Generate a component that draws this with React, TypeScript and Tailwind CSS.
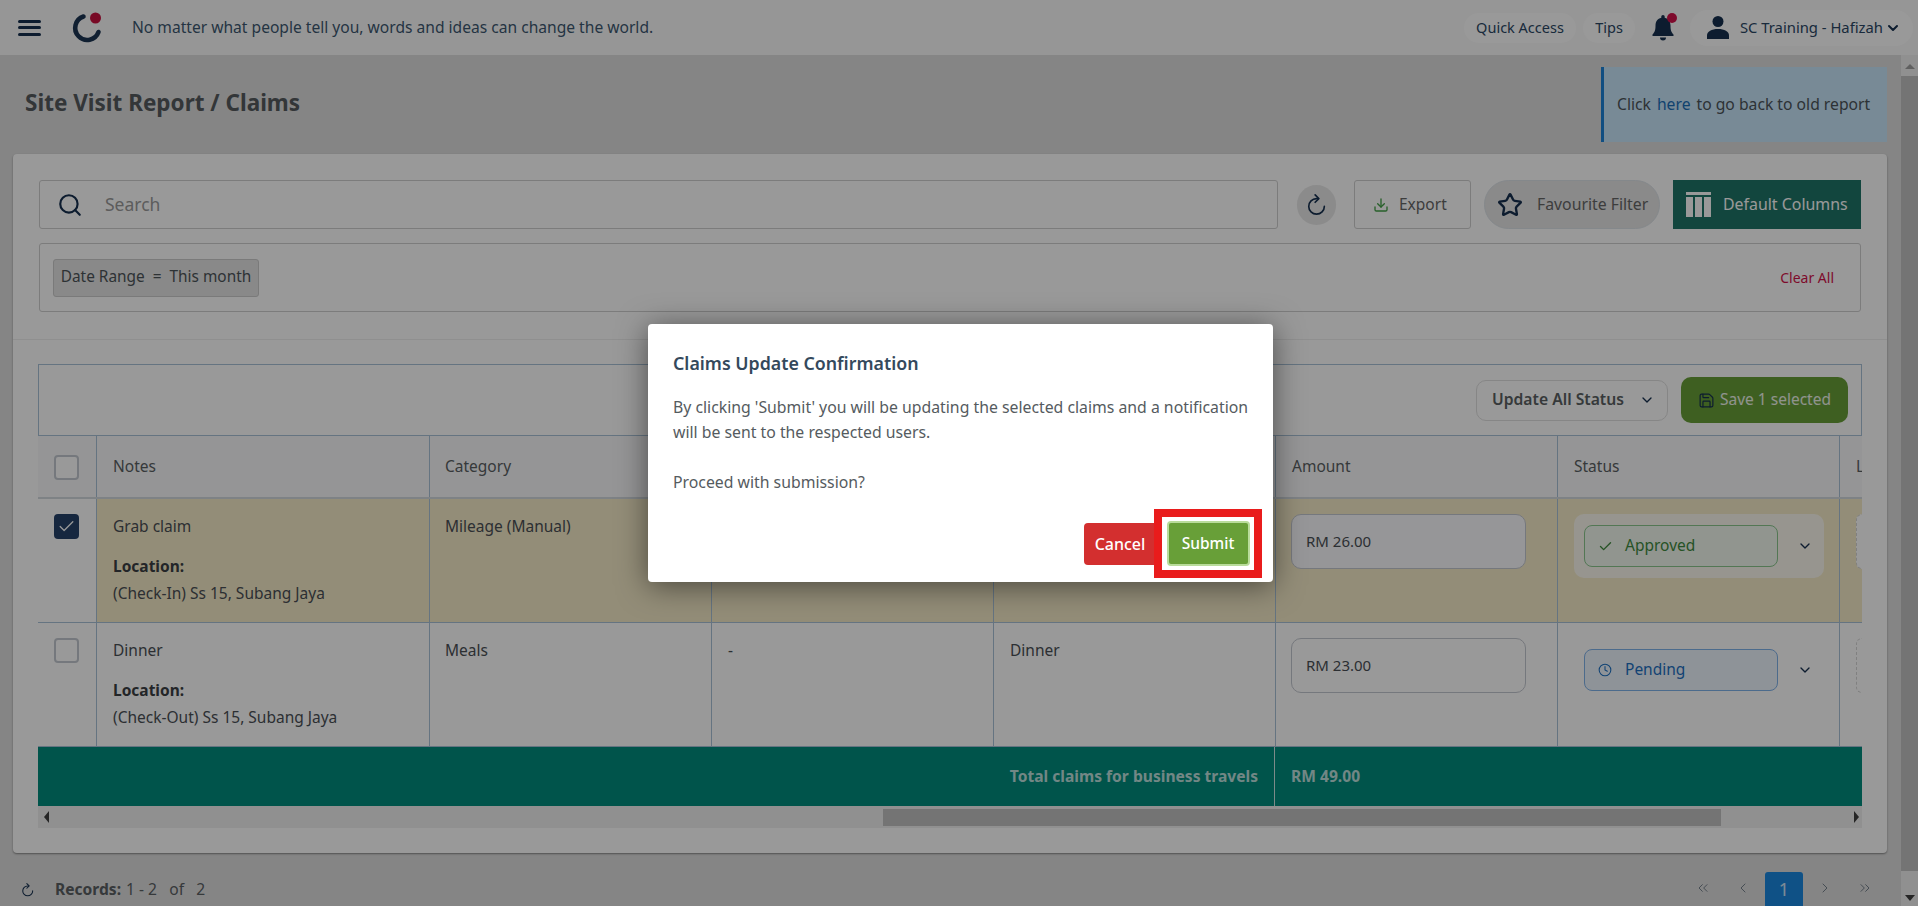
import { Check, ChevronDown, ChevronLeft, ChevronRight, ChevronsLeft, ChevronsRight, Clock, Download, Save, Search, Star } from "lucide-react";

const font = "font-['Noto_Sans','Open_Sans',sans-serif]";

function Logo() {
  return (
    <svg width="32" height="32" viewBox="0 0 32 32" fill="none">
      <path d="M12.5 4.5A12 12 0 1 0 27.5 20" stroke="#1c3553" strokeWidth="4.6" strokeLinecap="round" />
      <circle cx="24.5" cy="6" r="5.5" fill="#c8103f" />
    </svg>
  );
}

function Bell() {
  return (
    <svg width="22" height="26" viewBox="0 0 22 26" fill="#16304f">
      <path d="M11 0c1 0 1.700.8 1.700 1.700v1C16.500 3.500 18.500 6.600 18.500 10.500c0 5 .9 6.800 3 9V21H.5v-1.500c2.100-2.200 3-4 3-9 0-3.900 2-7 5.800-7.800v-1C9.300.8 10 0 11 0Z" />
      <path d="M8 22.500h6a3 3 0 0 1-6 0Z" />
    </svg>
  );
}

function Person() {
  return (
    <svg width="22" height="23" viewBox="0 0 22 23" fill="#16304f">
      <circle cx="11" cy="5.500" r="5.500" />
      <path d="M0 23v-3.500C0 15.500 4.500 13 11 13s11 2.500 11 6.500V23Z" />
    </svg>
  );
}

function ColumnsIcon() {
  return (
    <svg width="25" height="25" viewBox="0 0 25 25" fill="#ffffff">
      <rect x="0" y="0" width="25" height="3" />
      <rect x="0" y="5" width="7" height="20" />
      <rect x="9" y="5" width="7" height="20" />
      <rect x="18" y="5" width="7" height="20" />
    </svg>
  );
}

function Reload({ size }: { size: number }) {
  return (
    <svg width={size} height={size} viewBox="0 0 24 24" fill="none" stroke="#16304f" strokeWidth="1.800" strokeLinecap="round" strokeLinejoin="round">
      <path d="M20 13.500A8.500 8.500 0 1 1 11.500 5H13" />
      <path d="M10 1l4 4-4 4" />
    </svg>
  );
}

function Box({ checked }: { checked?: boolean }) {
  return (
    <div
      className={
        checked
          ? "w-[25px] h-[25px] rounded-[4px] bg-[#26426a] flex items-center justify-center"
          : "w-[25px] h-[25px] rounded-[4px] border-2 border-[#c3c9d0] bg-white"
      }
    >
      {checked && <Check size={19} strokeWidth={1.6} className="text-white" />}
    </div>
  );
}

function NotesCell({ title, place }: { title: string; place: string }) {
  return (
    <div className="border-r border-[#a9c1d8] pl-4 pt-[17px] text-[15.500px] text-[#4a4f55]">
      <p className="h-5 leading-5">{title}</p>
      <p className="mt-5 h-5 leading-5 font-bold text-[#3b3f44]">Location:</p>
      <p className="mt-[7px] h-5 leading-5">{place}</p>
    </div>
  );
}

function Row({ selected, title, place, category, children }: { selected?: boolean; title: string; place: string; category: string; children: React.ReactNode }) {
  return (
    <div className={`grid grid-cols-[59px_333px_282px_282px_282px_282px_282px_23px] h-[124px] border-b border-[#a9c1d8] ${selected ? "bg-[#f6ecc8]" : "bg-white"}`}>
      <div className="bg-white border-r border-[#a9c1d8] pl-4 pt-[15px]">
        <Box checked={selected} />
      </div>
      <NotesCell title={title} place={place} />
      <div className="border-r border-[#a9c1d8] pl-[15px] pt-[17px] text-[15.500px] leading-5 text-[#4a4f55]">{category}</div>
      {children}
    </div>
  );
}

function AmountInput({ value, filled }: { value: string; filled?: boolean }) {
  return (
    <div className={`w-[235px] h-[55px] rounded-[10px] border border-[#c4c8d0] flex items-center pl-[14px] text-[15px] text-[#4a4f55] ${filled ? "bg-[#fbfbfd]" : "bg-white"}`}>
      {value}
    </div>
  );
}

function DashedStub() {
  return <div className="w-[20px] ml-4 h-[55px] rounded-l-[6px] border border-dashed border-[#d5d5d5] bg-white" />;
}

export default function App() {
  return (
    <div className={`${font} relative w-[1918px] h-[906px] overflow-hidden flex flex-col bg-[#dedede]`}>
      {/* top bar */}
      <header className="h-[55px] shrink-0 bg-[#fbfbfb] flex items-center pl-[18px] pr-[5px]">
        <div className="w-[23px] flex flex-col gap-[3.500px]">
          <span className="h-[3px] rounded-full bg-[#16304f]" />
          <span className="h-[3px] rounded-full bg-[#16304f]" />
          <span className="h-[3px] rounded-full bg-[#16304f]" />
        </div>
        <div className="ml-[30px]">
          <Logo />
        </div>
        <p className="ml-[29px] text-[15.600px] text-[#3d5870]">No matter what people tell you, words and ideas can change the world.</p>
        <div className="ml-auto flex items-center">
          <button className="h-[30px] w-[112px] rounded-full bg-white text-[14.500px] text-[#2b4764]">Quick Access</button>
          <button className="ml-[7px] h-[30px] w-[52px] rounded-full bg-white text-[14.500px] text-[#2b4764]">Tips</button>
          <div className="relative ml-[17px] w-[21px]">
            <Bell />
            <span className="absolute -top-[2px] left-[15px] w-[10px] h-[10px] rounded-full bg-[#d3124a]" />
          </div>
          <div className="ml-[17px] h-[36px] w-[223px] rounded-full bg-white flex items-center pl-[17px]">
            <Person />
            <span className="ml-[11px] whitespace-nowrap text-[14.800px] text-[#2b4764]">SC Training - Hafizah</span>
            <ChevronDown size={16} strokeWidth={3} className="ml-auto mr-[12px] shrink-0 text-[#16304f]" />
          </div>
        </div>
      </header>

      <div className="flex-1 flex min-h-0">
        <main className="flex-1 min-w-0 flex flex-col">
          {/* page heading */}
          <div className="h-[99px] shrink-0 flex items-start pl-[25px] pr-[14px]">
            <h1 className="mt-[33px] text-[22.500px] leading-[30px] font-bold text-[#555a5e]">Site Visit Report / Claims</h1>
            <div className="ml-auto mt-3 w-[286px] h-[75px] bg-[#c8e6fb] border-l-[3px] border-[#1d83d8] flex items-center pl-[13px] text-[15.700px] text-[#4c5459]">
              Click<a className="mx-[6px] text-[#1b6fb8]">here</a>to go back to old report
            </div>
          </div>

          {/* filters + table card */}
          <section className="ml-[13px] mr-[14px] h-[699px] shrink-0 bg-white rounded-[4px] shadow-[0_1px_2px_rgba(0,0,0,0.4)]">
            <div className="h-[186px] px-[26px] pt-[26px] border-b border-[#eeeeee]">
              <div className="flex items-center h-[49px]">
                <div className="flex-1 h-full rounded-[3px] border border-[#cfcfcf] flex items-center pl-[17px]">
                  <Search size={26} strokeWidth={2} className="text-[#16304f]" />
                  <span className="ml-[22px] text-[17.500px] text-[#9a9a9a]">Search</span>
                </div>
                <button className="ml-[19px] w-[39px] h-[40px] rounded-full bg-[#e8e8e8] flex items-center justify-center">
                  <Reload size={22} />
                </button>
                <button className="ml-[18px] w-[117px] h-full rounded-[3px] border border-[#cfcfcf] flex items-center pl-[18px] text-[15.500px] text-[#666]">
                  <Download size={16} strokeWidth={2} className="text-[#43a047]" />
                  <span className="ml-[10px]">Export</span>
                </button>
                <button className="ml-[13px] w-[176px] h-full rounded-full bg-[#e6e6e6] border border-[#dde3e8] flex items-center pl-[12px] text-[15.800px] text-[#666]">
                  <Star size={26} strokeWidth={2.2} className="text-[#16304f]" />
                  <span className="ml-[14px]">Favourite Filter</span>
                </button>
                <button className="ml-[13px] w-[188px] h-full bg-[#1f7568] flex items-center pl-[13px] text-[15.900px] text-white">
                  <ColumnsIcon />
                  <span className="ml-[12px]">Default Columns</span>
                </button>
              </div>
              <div className="mt-[14px] h-[69px] rounded-[3px] border border-[#cfcfcf] flex items-center pl-[13px] pr-[26px]">
                <span className="h-[38px] w-[206px] rounded-[3px] border border-[#cccccc] bg-[#e4e4e4] flex items-center justify-center pb-[2px] text-[15.400px] text-[#4c5459]">
                  Date Range&nbsp; =&nbsp; This month
                </span>
                <span className="ml-auto text-[14px] text-[#d3124a]">Clear All</span>
              </div>
            </div>

            <div className="mx-[25px] mt-[24px] overflow-hidden">
              <div className="h-[72px] border border-[#a9c1d8] flex items-center justify-end pr-[13px]">
                <button className="w-[192px] h-[41px] rounded-[10px] border border-[#e0e0e0] flex items-center pl-[15px] text-[15.700px] font-semibold text-[#5a5f63]">
                  Update All Status
                  <ChevronDown size={16} strokeWidth={2} className="ml-auto mr-[12px] text-[#16304f]" />
                </button>
                <button className="ml-[13px] w-[167px] h-[46px] rounded-[10px] bg-[#689f38] flex items-center pl-[17px] text-[15.500px] text-white/90">
                  <Save size={17} strokeWidth={1.7} className="text-[#16304f]" />
                  <span className="ml-[5px]">Save 1 selected</span>
                </button>
              </div>

              {/* column heads */}
              <div className="grid grid-cols-[59px_333px_282px_282px_282px_282px_282px_23px] h-[63px] border-b-2 border-[#d3d9de] bg-[#f8f9fa] text-[15.500px] text-[#5a5f63]">
                <div className="border-r border-[#a9c1d8] pl-4 pt-[19px]"><Box /></div>
                <div className="border-r border-[#a9c1d8] pl-4 pt-[19px]">Notes</div>
                <div className="border-r border-[#a9c1d8] pl-[15px] pt-[19px]">Category</div>
                <div className="border-r border-[#a9c1d8]" />
                <div className="border-r border-[#a9c1d8]" />
                <div className="border-r border-[#a9c1d8] pl-4 pt-[19px]">Amount</div>
                <div className="border-r border-[#a9c1d8] pl-4 pt-[19px]">Status</div>
                <div className="pl-4 pt-[19px]">L</div>
              </div>

              <Row selected title="Grab claim" place="(Check-In) Ss 15, Subang Jaya" category="Mileage (Manual)">
                <div className="border-r border-[#a9c1d8]" />
                <div className="border-r border-[#a9c1d8]" />
                <div className="border-r border-[#a9c1d8] pl-[15px] pt-[15px]"><AmountInput value="RM 26.00" filled /></div>
                <div className="border-r border-[#a9c1d8] pl-4 pt-[15px]">
                  <div className="w-[250px] h-[64px] rounded-[10px] bg-white/70 flex items-center pl-[10px]">
                    <span className="w-[194px] h-[42px] rounded-[8px] border border-[#8ac78d] bg-[#f2f8ee] flex items-center pl-[13px] text-[15.500px] text-[#3f8a3f]">
                      <Check size={15} strokeWidth={2.2} className="text-[#3f8a3f]" />
                      <span className="ml-[12px]">Approved</span>
                    </span>
                    <ChevronDown size={16} strokeWidth={2} className="ml-[19px] text-[#16304f]" />
                  </div>
                </div>
                <div className="pt-[15px]"><DashedStub /></div>
              </Row>

              <Row title="Dinner" place="(Check-Out) Ss 15, Subang Jaya" category="Meals">
                <div className="border-r border-[#a9c1d8] pl-4 pt-[17px] text-[15.500px] leading-5 text-[#4a4f55]">-</div>
                <div className="border-r border-[#a9c1d8] pl-4 pt-[17px] text-[15.500px] leading-5 text-[#4a4f55]">Dinner</div>
                <div className="border-r border-[#a9c1d8] pl-[15px] pt-[15px]"><AmountInput value="RM 23.00" /></div>
                <div className="border-r border-[#a9c1d8] pl-[26px] pt-[26px]">
                  <div className="flex items-center">
                    <span className="w-[194px] h-[42px] rounded-[8px] border border-[#7fb2ea] bg-[#edf5fd] flex items-center pl-[13px] text-[15.500px] text-[#1d70c2]">
                      <Clock size={14} strokeWidth={1.8} className="text-[#1d70c2]" />
                      <span className="ml-[13px]">Pending</span>
                    </span>
                    <ChevronDown size={16} strokeWidth={2} className="ml-[19px] text-[#16304f]" />
                  </div>
                </div>
                <div className="pt-[15px]"><DashedStub /></div>
              </Row>

              {/* total */}
              <div className="h-[59px] bg-[#008c7e] flex text-[15.600px] font-bold text-white/75">
                <div className="w-[1237px] flex items-center justify-end pr-[16px] border-r border-[#cfe7e4]">Total claims for business travels</div>
                <div className="pl-4 flex items-center">RM 49.00</div>
              </div>

              {/* horizontal scrollbar */}
              <div className="h-[22px] bg-[#f1f1f1] flex items-center">
                <span className="ml-[6px] w-0 h-0 border-y-[6px] border-y-transparent border-r-[5px] border-r-[#404040]" />
                <span className="ml-[834px] w-[838px] h-[17px] bg-[#c1c1c1]" />
                <span className="ml-[133px] w-0 h-0 border-y-[6px] border-y-transparent border-l-[5px] border-l-[#404040]" />
              </div>
            </div>
          </section>

          {/* pager */}
          <div className="flex-1 flex items-start pl-[21px] pr-[28px] pt-[18px]">
            <div className="mt-[7px] flex items-center text-[15.600px] text-[#5a5f63]">
              <Reload size={14} />
              <span className="ml-[20px] font-bold">Records:</span>
              <span className="ml-[5px]">1 - 2&nbsp;&nbsp; of&nbsp;&nbsp; 2</span>
            </div>
            <div className="ml-auto flex items-start pt-px text-[#76818c]">
              <ChevronsLeft size={16} strokeWidth={1.5} className="mt-[8px]" />
              <ChevronLeft size={16} strokeWidth={1.5} className="mt-[8px] ml-[24px]" />
              <span className="ml-[14px] w-[38px] h-[44px] rounded-t-[3px] bg-[#1a87e0] flex items-center justify-center pb-[10px] text-[18px] text-white/80">1</span>
              <ChevronRight size={16} strokeWidth={1.5} className="mt-[8px] ml-[14px]" />
              <ChevronsRight size={16} strokeWidth={1.5} className="mt-[8px] ml-[24px]" />
            </div>
          </div>
        </main>

        {/* page scrollbar */}
        <div className="w-[17px] shrink-0 bg-[#f1f1f1] flex flex-col items-center">
          <span className="mt-[9px] w-0 h-0 border-x-[5px] border-x-transparent border-b-[5px] border-b-[#a0a0a0]" />
          <span className="mt-[7px] w-full h-[795px] bg-[#c1c1c1]" />
          <span className="mt-[24px] w-0 h-0 border-x-[5px] border-x-transparent border-t-[6px] border-t-[#404040]" />
        </div>
      </div>

      {/* dimmed backdrop */}
      <div className="absolute inset-0 bg-[rgba(0,0,0,0.4)]" />

      {/* confirmation dialog */}
      <div className="absolute left-[648px] top-[324px] w-[625px] h-[258px] rounded-[4px] bg-white shadow-[0_4px_30px_rgba(0,0,0,0.5)] pl-[25px] pt-[28px]">
        <h2 className="h-[22px] leading-[22px] text-[17.800px] font-semibold text-[#34495c]">Claims Update Confirmation</h2>
        <p className="mt-[21px] w-[590px] text-[15.800px] leading-[25px] text-[#555b60]">
          By clicking 'Submit' you will be updating the selected claims and a notification will be sent to the respected users.
        </p>
        <p className="mt-[25px] text-[15.800px] leading-[25px] text-[#555b60]">Proceed with submission?</p>
        <div className="absolute right-[11px] bottom-[4px] flex items-center">
          <button className="w-[70px] h-[42px] rounded-l-[4px] bg-[#d32f2f] pl-[2px] text-[16px] font-medium text-white">Cancel</button>
          <div className="w-[108px] h-[69px] border-[8px] border-[#e91c1c] bg-white flex items-center justify-center">
            <button className="w-[83px] h-[45px] rounded-[4px] border-2 border-[#b9dc9b] bg-[#689f38] text-[15.500px] font-medium text-white">Submit</button>
          </div>
        </div>
      </div>
    </div>
  );
}
